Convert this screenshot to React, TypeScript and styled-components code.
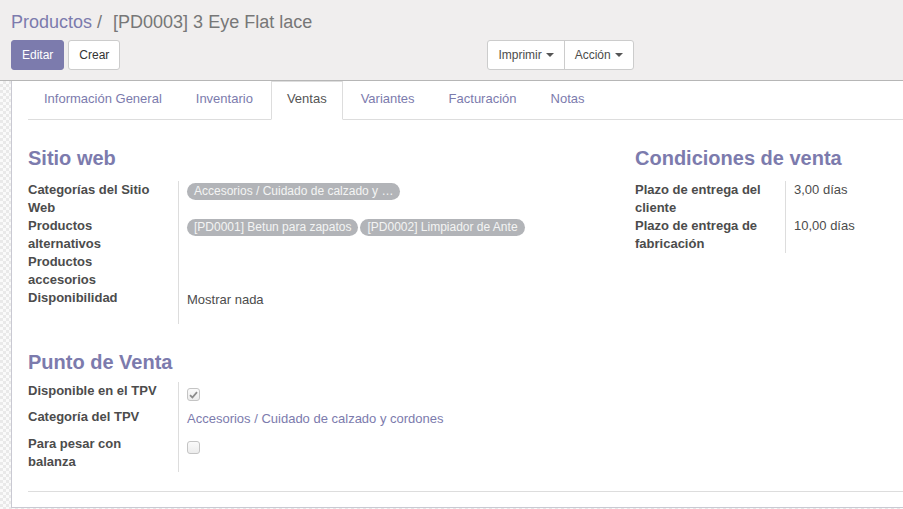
import React from 'react'
import styled, { createGlobalStyle } from 'styled-components'

const purple = '#7c7bad'
const text = '#4c4c4c'

const GlobalStyle = createGlobalStyle`
  html, body {
    margin: 0;
    padding: 0;
    background: #fff;
  }
  body {
    font-family: "Liberation Sans", Arial, sans-serif;
    font-size: 13px;
    color: ${text};
  }
  * { box-sizing: border-box; }
`

const Page = styled.div`
  width: 903px;
  height: 509px;
  overflow: hidden;
  display: flex;
  flex-direction: column;
`

const ControlPanel = styled.div`
  height: 81px;
  flex: none;
  background: #f0eeee;
  border-bottom: 1px solid #b6b6b6;
  padding: 10px 11px 0 11px;
`

const Breadcrumb = styled.div`
  font-size: 18px;
  line-height: 24px;
  color: #777;
  white-space: nowrap;
  a {
    color: ${purple};
    text-decoration: none;
  }
  span.sep {
    margin: 0 11px 0 5px;
  }
`

const ButtonBar = styled.div`
  display: flex;
  align-items: center;
  margin-top: 6px;
`

const Button = styled.button<{ primary?: boolean }>`
  height: 30px;
  padding: 0 10px;
  font-family: inherit;
  font-size: 12px;
  border-radius: 3px;
  margin-right: 4px;
  border: 1px solid ${p => p.primary ? purple : '#ccc'};
  background: ${p => p.primary ? purple : '#fff'};
  color: ${p => p.primary ? '#fff' : '#333'};
  cursor: pointer;
`

const BtnGroup = styled.div`
  display: flex;
  margin-left: 363px;
  border: 1px solid #ccc;
  border-radius: 3px;
  background: #fff;
  height: 30px;
`

const GroupBtn = styled.button`
  font-family: inherit;
  font-size: 12px;
  color: #4c4c4c;
  background: transparent;
  border: none;
  padding: 0 10px;
  display: flex;
  align-items: center;
  gap: 4px;
  & + & {
    border-left: 1px solid #ccc;
  }
`

const Caret = styled.span`
  width: 0;
  height: 0;
  border-left: 4px solid transparent;
  border-right: 4px solid transparent;
  border-top: 4px solid #555;
`

const SheetBg = styled.div`
  flex: 1;
  display: flex;
  padding-left: 11px;
  background-color: #f4f4f4;
  background-image: repeating-conic-gradient(#e9e9e9 0 25%, #fafafa 0 50%);
  background-size: 6px 6px;
  align-items: flex-start;
`

const Sheet = styled.div`
  flex: 1;
  background: #fff;
  border-left: 1px solid #c9c9d2;
  border-bottom: 1px solid #c9c9d2;
  padding: 0 0 15px 16px;
  height: 427px;
`

const Tabs = styled.ul`
  list-style: none;
  margin: 0;
  padding: 0;
  display: flex;
  border-bottom: 1px solid #ddd;
`

const Tab = styled.li<{ active?: boolean }>`
  margin-right: 2px;
  margin-bottom: -1px;
  padding: 9px 15px 11px;
  line-height: 16px;
  height: 39px;
  font-size: 13px;
  border: 1px solid ${p => p.active ? '#ddd' : 'transparent'};
  border-bottom-color: ${p => p.active ? '#fff' : 'transparent'};
  background: ${p => p.active ? '#fff' : 'transparent'};
  color: ${p => p.active ? '#555' : purple};
  white-space: nowrap;
`

const Groups = styled.div`
  display: flex;
  padding-top: 26px;
`

const Group = styled.div<{ width?: number }>`
  ${p => p.width ? `width: ${p.width}px; flex: none;` : 'flex: 1;'}
`

const GroupTitle = styled.h2<{ gap?: number }>`
  margin: 0 0 ${p => p.gap ?? 11}px 0;
  font-size: 20px;
  line-height: 24px;
  font-weight: bold;
  color: ${purple};
`

const Field = styled.div<{ h: number, labelPad?: number }>`
  display: grid;
  grid-template-columns: 151px 1fr;
  height: ${p => p.h}px;
  & > div:first-child {
    padding-right: ${p => p.labelPad ?? 15}px;
  }
`

const Label = styled.div`
  font-weight: bold;
  line-height: 18px;
  border-right: 1px solid #ddd;
`

const Value = styled.div<{ pt?: number }>`
  padding-left: 8px;
  padding-top: ${p => p.pt ?? 0}px;
  line-height: 18px;
  display: flex;
  align-items: flex-start;
  gap: 2px;
  white-space: nowrap;
`

const Tag = styled.span`
  display: inline-block;
  height: 17px;
  line-height: 17px;
  padding: 0 7px;
  border-radius: 9px;
  background: #b2b4b8;
  color: #f4f4f4;
  font-size: 12px;
  margin-top: 2px;
`

const Link = styled.span`
  color: ${purple};
`

const Check = styled.span`
  display: inline-flex;
  align-items: center;
  justify-content: center;
  width: 13px;
  height: 13px;
  margin-top: 6px;
  border: 1px solid #c4c4c4;
  border-radius: 3px;
  background: linear-gradient(#fafafa, #ececec);
`

const Section = styled.div`
  padding-top: 26px;
`

const Separator = styled.div`
  border-top: 1px solid #ddd;
  margin-top: 19px;
`

const CheckMark = () => (
  <svg width="9" height="8" viewBox="0 0 9 8">
    <path d="M1 4.2 L3.4 6.5 L8 1.2" fill="none" stroke="#8c8c8c" strokeWidth="1.8" />
  </svg>
)

export default function App() {
  return (
    <Page>
      <GlobalStyle />
      <ControlPanel>
        <Breadcrumb>
          <a>Productos</a><span className="sep">/</span>[PD0003] 3 Eye Flat lace
        </Breadcrumb>
        <ButtonBar>
          <Button primary>Editar</Button>
          <Button>Crear</Button>
          <BtnGroup>
            <GroupBtn>Imprimir <Caret /></GroupBtn>
            <GroupBtn>Acción <Caret /></GroupBtn>
          </BtnGroup>
        </ButtonBar>
      </ControlPanel>
      <SheetBg>
        <Sheet>
          <Tabs>
            <Tab>Información General</Tab>
            <Tab>Inventario</Tab>
            <Tab active>Ventas</Tab>
            <Tab>Variantes</Tab>
            <Tab>Facturación</Tab>
            <Tab>Notas</Tab>
          </Tabs>
          <Groups>
            <Group width={607}>
              <GroupTitle>Sitio web</GroupTitle>
              <Field h={36} labelPad={28}>
                <Label>Categorías del Sitio Web</Label>
                <Value><Tag>Accesorios / Cuidado de calzado y …</Tag></Value>
              </Field>
              <Field h={36} labelPad={28}>
                <Label>Productos alternativos</Label>
                <Value>
                  <Tag>[PD0001] Betun para zapatos</Tag>
                  <Tag>[PD0002] Limpiador de Ante</Tag>
                </Value>
              </Field>
              <Field h={36} labelPad={28}>
                <Label>Productos accesorios</Label>
                <Value />
              </Field>
              <Field h={35} labelPad={28}>
                <Label>Disponibilidad</Label>
                <Value pt={2}>Mostrar nada</Value>
              </Field>
            </Group>
            <Group>
              <GroupTitle>Condiciones de venta</GroupTitle>
              <Field h={36}>
                <Label>Plazo de entrega del cliente</Label>
                <Value>3,00 días</Value>
              </Field>
              <Field h={36}>
                <Label>Plazo de entrega de fabricación</Label>
                <Value>10,00 días</Value>
              </Field>
            </Group>
          </Groups>
          <Section>
            <GroupTitle gap={8}>Punto de Venta</GroupTitle>
            <Field h={26}>
              <Label>Disponible en el TPV</Label>
              <Value><Check><CheckMark /></Check></Value>
            </Field>
            <Field h={27}>
              <Label>Categoría del TPV</Label>
              <Value pt={2}><Link>Accesorios / Cuidado de calzado y cordones</Link></Value>
            </Field>
            <Field h={37}>
              <Label>Para pesar con balanza</Label>
              <Value><Check /></Value>
            </Field>
          </Section>
          <Separator />
        </Sheet>
      </SheetBg>
    </Page>
  )
}
